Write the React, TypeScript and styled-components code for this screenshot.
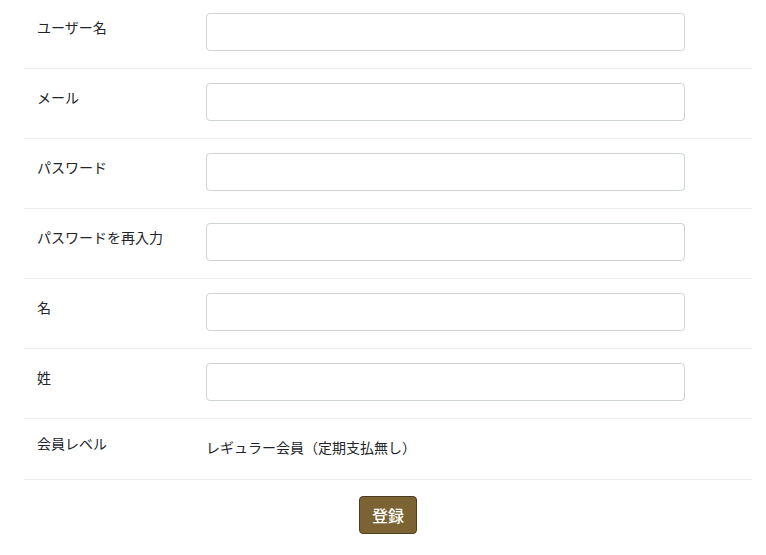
import styled, { createGlobalStyle } from "styled-components";

const GlobalStyle = createGlobalStyle`
  body {
    margin: 0;
    background: #fff;
    color: #212529;
    font-family: "Noto Sans CJK JP", "Noto Sans", sans-serif;
    font-size: 14px;
    line-height: 1.5;
  }
`;

const Form = styled.form`
  width: 728px;
  margin: -1px 0 0 24px;
`;

const Row = styled.div<{ $static?: boolean }>`
  display: grid;
  grid-template-columns: 182px 1fr;
  border-bottom: 1px solid #ececec;
  height: ${(p) => (p.$static ? "60px" : "69px")};
`;

const Label = styled.label<{ $static?: boolean }>`
  padding: ${(p) => (p.$static ? "14px" : "18px")} 13px 0;
`;

const Field = styled.div<{ $static?: boolean }>`
  padding-top: ${(p) => (p.$static ? "18px" : "14px")};
`;

const Input = styled.input`
  display: block;
  box-sizing: border-box;
  width: 479px;
  height: 38px;
  border: 1px solid #ced4da;
  border-radius: 4px;
  padding: 6px 12px;
  font: inherit;
  outline: none;
`;

const Actions = styled.div`
  display: flex;
  justify-content: center;
  padding-top: 16px;
`;

const SubmitButton = styled.button`
  width: 58px;
  height: 38px;
  border: 1px solid #4e3d1c;
  border-radius: 4px;
  background: #7b6333;
  color: #fff;
  font-family: "Noto Sans CJK JP", sans-serif;
  font-size: 16px;
  font-weight: 500;
  cursor: pointer;
`;

const fields = [
  { label: "ユーザー名", type: "text" },
  { label: "メール", type: "email" },
  { label: "パスワード", type: "password" },
  { label: "パスワードを再入力", type: "password" },
  { label: "名", type: "text" },
  { label: "姓", type: "text" },
];

const App = () => (
  <>
    <GlobalStyle />
    <Form onSubmit={(e) => e.preventDefault()}>
      {fields.map((f) => (
        <Row key={f.label}>
          <Label>{f.label}</Label>
          <Field>
            <Input type={f.type} />
          </Field>
        </Row>
      ))}
      <Row $static>
        <Label $static>会員レベル</Label>
        <Field $static>レギュラー会員（定期支払無し）</Field>
      </Row>
      <Actions>
        <SubmitButton type="submit">登録</SubmitButton>
      </Actions>
    </Form>
  </>
);

export default App;
